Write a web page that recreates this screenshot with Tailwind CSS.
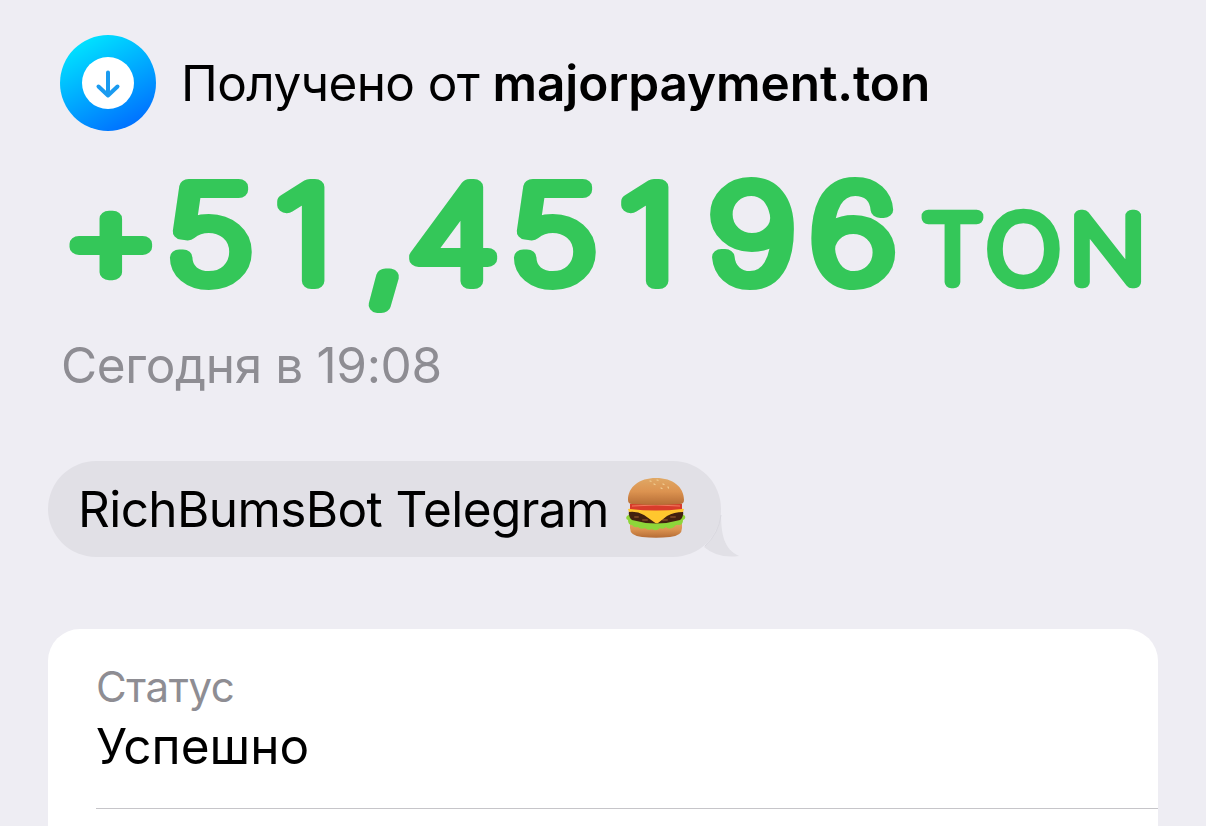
<!DOCTYPE html>
<html lang="ru">
<head>
    <meta charset="UTF-8">
    <meta name="viewport" content="width=device-width, initial-scale=1.0">
    <script src="https://cdn.jsdelivr.net/npm/@tailwindcss/browser@4"></script>
    <title>TON</title>
</head>
<body class="bg-[#eeedf3] font-['Inter',sans-serif] text-black">
    <main class="flex flex-col w-[1206px] h-screen overflow-hidden px-12 pt-[35px]">
        <header class="flex items-center gap-[25px] pl-3 h-24 shrink-0">
            <svg class="size-24 shrink-0" viewBox="0 0 96 96" fill="none">
                <defs>
                    <linearGradient id="badge" x1="20" y1="4" x2="70" y2="94" gradientUnits="userSpaceOnUse">
                        <stop stop-color="#00e5ff"/>
                        <stop offset="1" stop-color="#006fff"/>
                    </linearGradient>
                </defs>
                <circle cx="48" cy="48" r="48" fill="url(#badge)"/>
                <circle cx="48" cy="48" r="26" fill="#fff"/>
                <path d="M48 37.500v23M38.500 51.500l9.500 9 9.500-9" stroke="#1a9bf0" stroke-width="4" stroke-linecap="round" stroke-linejoin="round"/>
            </svg>
            <h1 class="pt-0.5 text-[49.5px] leading-none tracking-[-0.6px] whitespace-nowrap">Получено от <b class="font-semibold tracking-[-0.1px]">majorpayment.ton</b></h1>
        </header>

        <!-- amount: thin text with a thick round-joined stroke gives the rounded face -->
        <svg class="w-[1110px] h-[170px] mt-[29px] shrink-0 overflow-visible" viewBox="48 160 1110 170" fill="#34c759" stroke="#34c759" stroke-linejoin="round" font-family="Inter" font-weight="100">
            <text transform="scale(1.19 1)" font-size="129.5" stroke-width="16" y="282 281 281 286 281" x="51.9 139.9 231.7 307.1 342.2 428.9 520.8 595.3 680.4">+51,45196</text>
            <text transform="scale(1.08 1)" font-size="90.8" stroke-width="12.5" y="282.5" x="854 913.6 990.5">TON</text>
        </svg>

        <p class="mt-2.5 pl-[13px] shrink-0 text-[49.5px] leading-[50px] tracking-[-0.35px] text-[#8e8d93]">Сегодня в 19:08</p>

        <div class="relative flex items-center gap-[17px] w-[673px] h-24 shrink-0 mt-[71px] pl-[30px] rounded-full bg-[#e1e0e6] text-[49.5px] tracking-[-0.6px] whitespace-nowrap">
            <span>RichBumsBot Telegram</span>
            <svg class="w-[60px] h-[62px] shrink-0 -mt-1" viewBox="0 0 60 62">
                <defs>
                    <linearGradient id="bun" x1="0" y1="0" x2="0" y2="1">
                        <stop stop-color="#e0a865"/>
                        <stop offset=".5" stop-color="#dc9350"/>
                        <stop offset="1" stop-color="#b56c35"/>
                    </linearGradient>
                </defs>
                <path d="M4 45h52v7q0 8-12 9-14 1.500-28 0Q4 60 4 52z" fill="url(#bun)"/>
                <path d="M1 40q3-3 6-1h46q4-2 6 1 1 3-2 4 0 5-4 5-3-1-5 2-5 3-8 0-3 3-6 1-4 4-8 1-4 2-7-1-4 2-7-1-4 1-6-2-4 0-4-5-3-1-1-4z" fill="#8ed63a"/>
                <path d="M3 35q27-5 54 0 1 6-3 9-24 7-48 0-4-3-3-9z" fill="#42200f"/>
                <path d="M9 41h3M17 44h4M37 44h4M45 41h4" stroke="#72401f" stroke-width="2" stroke-linecap="round"/>
                <path d="M2 33q28-5 56 0l-1 3q-9 0-16 4l-9 7q-2 1-4-1l-10-7q-7-4-15-3z" fill="#ffc72e"/>
                <path d="M4 28q26-3 52 0v5q-26 3-52 0z" fill="#d83b2b"/>
                <path d="M6 30q24-2 48 0" stroke="#f27a5e" stroke-width="1" fill="none"/>
                <path d="M2 24C2 11 13 2 30 2s28 9 28 22q0 4-4 4-24 2-48 0-4 0-4-4z" fill="url(#bun)"/>
                <path d="M24 5l1 .3M31 4l1 .3M28 8l1 .5M37 8l1 .5M42 11l.5 1M35 12l1 .5" stroke="#f2cf94" stroke-width="1.200" stroke-linecap="round"/>
            </svg>
            <svg class="absolute left-[654px] top-[50px] w-[38px] h-[46px]" viewBox="0 0 38 46">
                <path d="M19 0C19 24 22 38 37 45Q16 48 2 36Q17 22 19 0z" fill="#e1e0e6"/>
                <path d="M19 4Q17 22 3 35" fill="none" stroke="#d9d8df" stroke-width="1"/>
            </svg>
        </div>

        <section class="mt-[72px] flex-1 min-h-0 rounded-t-[32px] bg-white pl-12 pt-[33px]">
            <p class="text-[42px] leading-[50px] tracking-[-0.4px] text-[#8e8d93]">Статус</p>
            <p class="mt-1 text-[49.5px] leading-[60px]">Успешно</p>
            <hr class="mt-8 border-[#c6c5c9]">
        </section>
    </main>
</body>
</html>
